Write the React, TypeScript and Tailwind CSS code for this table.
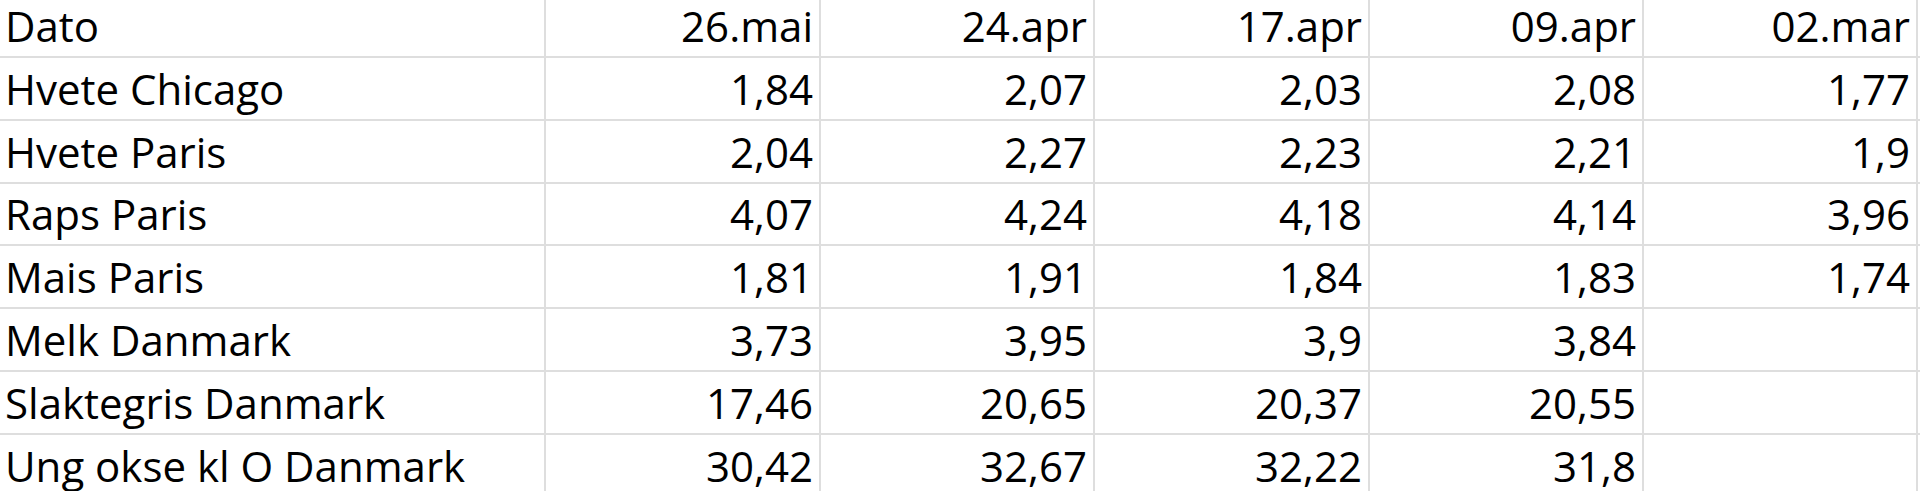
import React from "react";

const headers = ["26.mai", "24.apr", "17.apr", "09.apr", "02.mar"];
const rows: [string, string[]][] = [
  ["Hvete Chicago", ["1,84", "2,07", "2,03", "2,08", "1,77"]],
  ["Hvete Paris", ["2,04", "2,27", "2,23", "2,21", "1,9"]],
  ["Raps Paris", ["4,07", "4,24", "4,18", "4,14", "3,96"]],
  ["Mais Paris", ["1,81", "1,91", "1,84", "1,83", "1,74"]],
  ["Melk Danmark", ["3,73", "3,95", "3,9", "3,84", ""]],
  ["Slaktegris Danmark", ["17,46", "20,65", "20,37", "20,55", ""]],
  ["Ung okse kl O Danmark", ["30,42", "32,67", "32,22", "31,8", ""]],
];

function Row({ label, cells, first }: { label: string; cells: string[]; first?: boolean }) {
  return (
    <div
      className={`grid grid-cols-[546px_275px_274px_275px_274px_274px] grid-rows-[minmax(0,1fr)] border-b-2 border-[#dedede] ${
        first ? "h-[58px]" : "h-[62.83px]"
      }`}
    >
      <div className="flex items-end border-r-2 border-[#dedede] pl-[5px] pb-[5px] leading-[50px] whitespace-nowrap">
        {label}
      </div>
      {cells.map((c, i) => (
        <div
          key={i}
          className="flex items-end justify-end border-r-2 border-[#dedede] pr-[6px] pb-[5px] leading-[50px] whitespace-nowrap"
        >
          {c}
        </div>
      ))}
    </div>
  );
}

export default function App() {
  return (
    <div
      className="w-[1920px] h-[491px] overflow-hidden bg-white text-black text-[42px]"
      style={{ fontFamily: '"Open Sans", sans-serif' }}
    >
      <Row label="Dato" cells={headers} first />
      {rows.map(([l, c]) => (
        <Row key={l} label={l} cells={c} />
      ))}
    </div>
  );
}
